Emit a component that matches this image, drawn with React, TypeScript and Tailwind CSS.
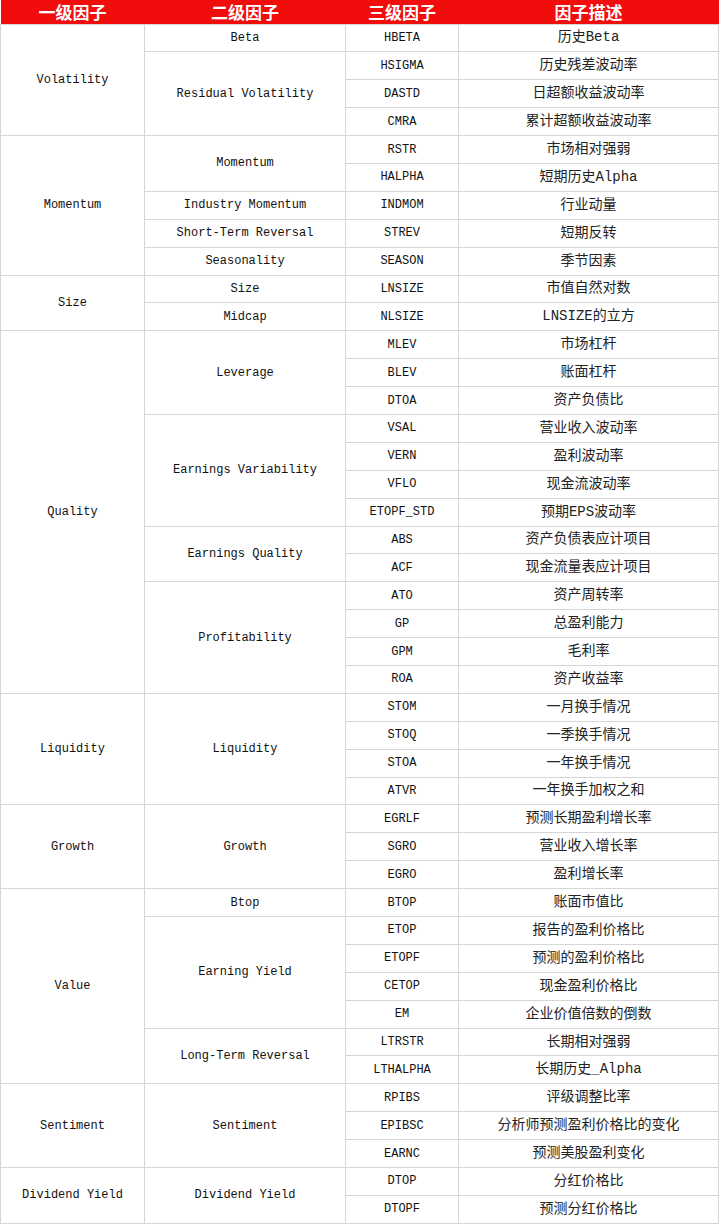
import React from "react";

type Sub = { name: string; items: [string, string][] };
type Group = { name: string; subs: Sub[] };

const groups: Group[] = [
  {
    name: "Volatility",
    subs: [
      { name: "Beta", items: [["HBETA", "历史Beta"]] },
      {
        name: "Residual Volatility",
        items: [
          ["HSIGMA", "历史残差波动率"],
          ["DASTD", "日超额收益波动率"],
          ["CMRA", "累计超额收益波动率"],
        ],
      },
    ],
  },
  {
    name: "Momentum",
    subs: [
      {
        name: "Momentum",
        items: [
          ["RSTR", "市场相对强弱"],
          ["HALPHA", "短期历史Alpha"],
        ],
      },
      { name: "Industry Momentum", items: [["INDMOM", "行业动量"]] },
      { name: "Short-Term Reversal", items: [["STREV", "短期反转"]] },
      { name: "Seasonality", items: [["SEASON", "季节因素"]] },
    ],
  },
  {
    name: "Size",
    subs: [
      { name: "Size", items: [["LNSIZE", "市值自然对数"]] },
      { name: "Midcap", items: [["NLSIZE", "LNSIZE的立方"]] },
    ],
  },
  {
    name: "Quality",
    subs: [
      {
        name: "Leverage",
        items: [
          ["MLEV", "市场杠杆"],
          ["BLEV", "账面杠杆"],
          ["DTOA", "资产负债比"],
        ],
      },
      {
        name: "Earnings Variability",
        items: [
          ["VSAL", "营业收入波动率"],
          ["VERN", "盈利波动率"],
          ["VFLO", "现金流波动率"],
          ["ETOPF_STD", "预期EPS波动率"],
        ],
      },
      {
        name: "Earnings Quality",
        items: [
          ["ABS", "资产负债表应计项目"],
          ["ACF", "现金流量表应计项目"],
        ],
      },
      {
        name: "Profitability",
        items: [
          ["ATO", "资产周转率"],
          ["GP", "总盈利能力"],
          ["GPM", "毛利率"],
          ["ROA", "资产收益率"],
        ],
      },
    ],
  },
  {
    name: "Liquidity",
    subs: [
      {
        name: "Liquidity",
        items: [
          ["STOM", "一月换手情况"],
          ["STOQ", "一季换手情况"],
          ["STOA", "一年换手情况"],
          ["ATVR", "一年换手加权之和"],
        ],
      },
    ],
  },
  {
    name: "Growth",
    subs: [
      {
        name: "Growth",
        items: [
          ["EGRLF", "预测长期盈利增长率"],
          ["SGRO", "营业收入增长率"],
          ["EGRO", "盈利增长率"],
        ],
      },
    ],
  },
  {
    name: "Value",
    subs: [
      { name: "Btop", items: [["BTOP", "账面市值比"]] },
      {
        name: "Earning Yield",
        items: [
          ["ETOP", "报告的盈利价格比"],
          ["ETOPF", "预测的盈利价格比"],
          ["CETOP", "现金盈利价格比"],
          ["EM", "企业价值倍数的倒数"],
        ],
      },
      {
        name: "Long-Term Reversal",
        items: [
          ["LTRSTR", "长期相对强弱"],
          ["LTHALPHA", "长期历史_Alpha"],
        ],
      },
    ],
  },
  {
    name: "Sentiment",
    subs: [
      {
        name: "Sentiment",
        items: [
          ["RPIBS", "评级调整比率"],
          ["EPIBSC", "分析师预测盈利价格比的变化"],
          ["EARNC", "预测美股盈利变化"],
        ],
      },
    ],
  },
  {
    name: "Dividend Yield",
    subs: [
      {
        name: "Dividend Yield",
        items: [
          ["DTOP", "分红价格比"],
          ["DTOPF", "预测分红价格比"],
        ],
      },
    ],
  },
];

const mono = "font-['Liberation_Mono','DejaVu_Sans_Mono',monospace] text-[12px] text-[#111]";
const cjk = "font-['Liberation_Mono','Noto_Sans_CJK_SC',monospace] text-[14px] text-[#222]";
const cell = "border border-[#d6d6d6] text-center align-middle p-0";

export default function App() {
  const rows: React.ReactNode[] = [];
  groups.forEach((g) => {
    const gCount = g.subs.reduce((n, s) => n + s.items.length, 0);
    g.subs.forEach((s, si) => {
      s.items.forEach(([code, desc], ii) => {
        rows.push(
          <tr key={code} className="h-[27.9px]">
            {si === 0 && ii === 0 && (
              <td rowSpan={gCount} className={`${cell} ${mono}`}>
                {g.name}
              </td>
            )}
            {ii === 0 && (
              <td rowSpan={s.items.length} className={`${cell} ${mono}`}>
                {s.name}
              </td>
            )}
            <td className={`${cell} ${mono}`}>{code}</td>
            <td className={`${cell} ${cjk}`}>{desc}</td>
          </tr>
        );
      });
    });
  });

  return (
    <div className="w-[720px] bg-white">
      <table className="w-[719px] table-fixed border-collapse">
        <colgroup>
          <col className="w-[144px]" />
          <col className="w-[201px]" />
          <col className="w-[113px]" />
          <col />
        </colgroup>
        <thead>
          <tr className="h-[24px] bg-[#f20d0d] text-white font-bold text-[17px] font-['Noto_Sans_CJK_SC',sans-serif] leading-none">
            <th className="border-b border-[#d6d6d6] p-0">一级因子</th>
            <th className="border-b border-[#d6d6d6] p-0">二级因子</th>
            <th className="border-b border-[#d6d6d6] p-0">三级因子</th>
            <th className="border-b border-[#d6d6d6] p-0">因子描述</th>
          </tr>
        </thead>
        <tbody>{rows}</tbody>
      </table>
    </div>
  );
}
